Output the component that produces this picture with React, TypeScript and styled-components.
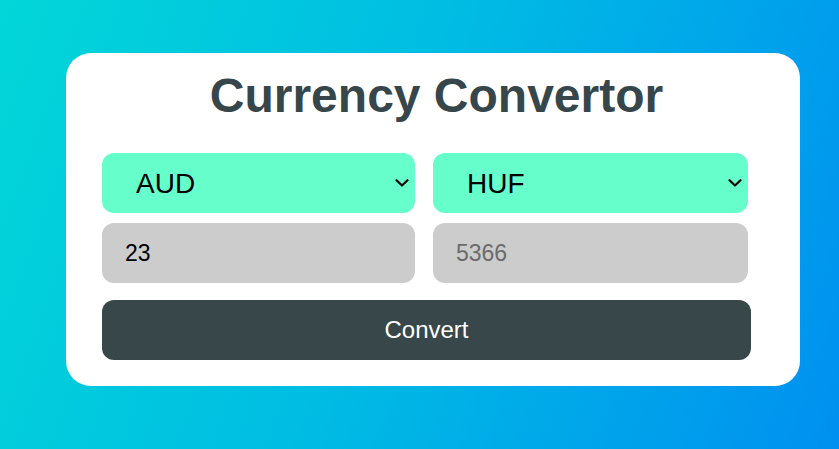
import React, { useState } from "react";
import styled, { createGlobalStyle } from "styled-components";

const GlobalStyle = createGlobalStyle`
  html, body { margin: 0; padding: 0; }
  body {
    width: 839px;
    height: 449px;
    overflow: hidden;
    font-family: "Liberation Sans", Arial, sans-serif;
    background: linear-gradient(110deg, #02d6d8 0%, #00bde3 45%, #0090f0 100%);
  }
`;

const chevron =
  "url(\"data:image/svg+xml;utf8,<svg xmlns='http://www.w3.org/2000/svg' width='14' height='8' viewBox='0 0 14 8'><path d='M1.5 1.2 L7 6.5 L12.5 1.2' fill='none' stroke='black' stroke-width='2.2' stroke-linecap='round' stroke-linejoin='round'/></svg>\")";

const Page = styled.main`
  box-sizing: border-box;
  width: 839px;
  height: 449px;
  padding: 53px 0 0 66px;
`;

const Card = styled.section`
  box-sizing: border-box;
  width: 734px;
  height: 333px;
  background: #ffffff;
  border-radius: 25px;
  padding: 15px 0 0 36px;
`;

const Title = styled.h1`
  margin: 0 0 30px 0;
  width: 649px;
  padding-left: 20px;
  box-sizing: border-box;
  text-align: center;
  font-size: 48px;
  line-height: 55px;
  font-weight: 700;
  color: #37464a;
`;

const Grid = styled.div`
  display: grid;
  grid-template-columns: 313px 315px;
  column-gap: 18px;
  row-gap: 10px;
`;

const Select = styled.select`
  appearance: none;
  -webkit-appearance: none;
  box-sizing: border-box;
  height: 60px;
  border: none;
  outline: none;
  border-radius: 12px;
  background-color: #66ffcc;
  background-image: ${chevron};
  background-repeat: no-repeat;
  background-size: 14px 8px;
  background-position: right 6px center;
  color: #000;
  font-family: "Liberation Sans", Arial, sans-serif;
  font-size: 28px;
  padding: 0 24px 0 34px;
`;

const Input = styled.input`
  box-sizing: border-box;
  height: 60px;
  border: none;
  outline: none;
  border-radius: 12px;
  background: #cccccc;
  color: #000;
  font-family: "Liberation Sans", Arial, sans-serif;
  font-size: 23px;
  padding: 0 0 0 23px;
  &::placeholder { color: #6b6b6b; }
`;

const Button = styled.button`
  margin-top: 17px;
  width: 649px;
  height: 60px;
  border: none;
  border-radius: 12px;
  background: #37474a;
  color: #ffffff;
  font-family: "Liberation Sans", Arial, sans-serif;
  font-size: 24px;
  cursor: pointer;
`;

const currencies = ["AUD", "HUF", "USD", "EUR", "GBP", "INR", "JPY"];

export default function App() {
  const [from, setFrom] = useState("AUD");
  const [to, setTo] = useState("HUF");
  const [amount, setAmount] = useState("23");
  return (
    <>
      <GlobalStyle />
      <Page>
        <Card>
          <Title>Currency Convertor</Title>
          <Grid>
            <Select value={from} onChange={(e) => setFrom(e.target.value)}>
              {currencies.map((c) => (
                <option key={c} value={c}>{c}</option>
              ))}
            </Select>
            <Select value={to} onChange={(e) => setTo(e.target.value)}>
              {currencies.map((c) => (
                <option key={c} value={c}>{c}</option>
              ))}
            </Select>
            <Input value={amount} onChange={(e) => setAmount(e.target.value)} />
            <Input placeholder="5366" readOnly />
          </Grid>
          <Button>Convert</Button>
        </Card>
      </Page>
    </>
  );
}
